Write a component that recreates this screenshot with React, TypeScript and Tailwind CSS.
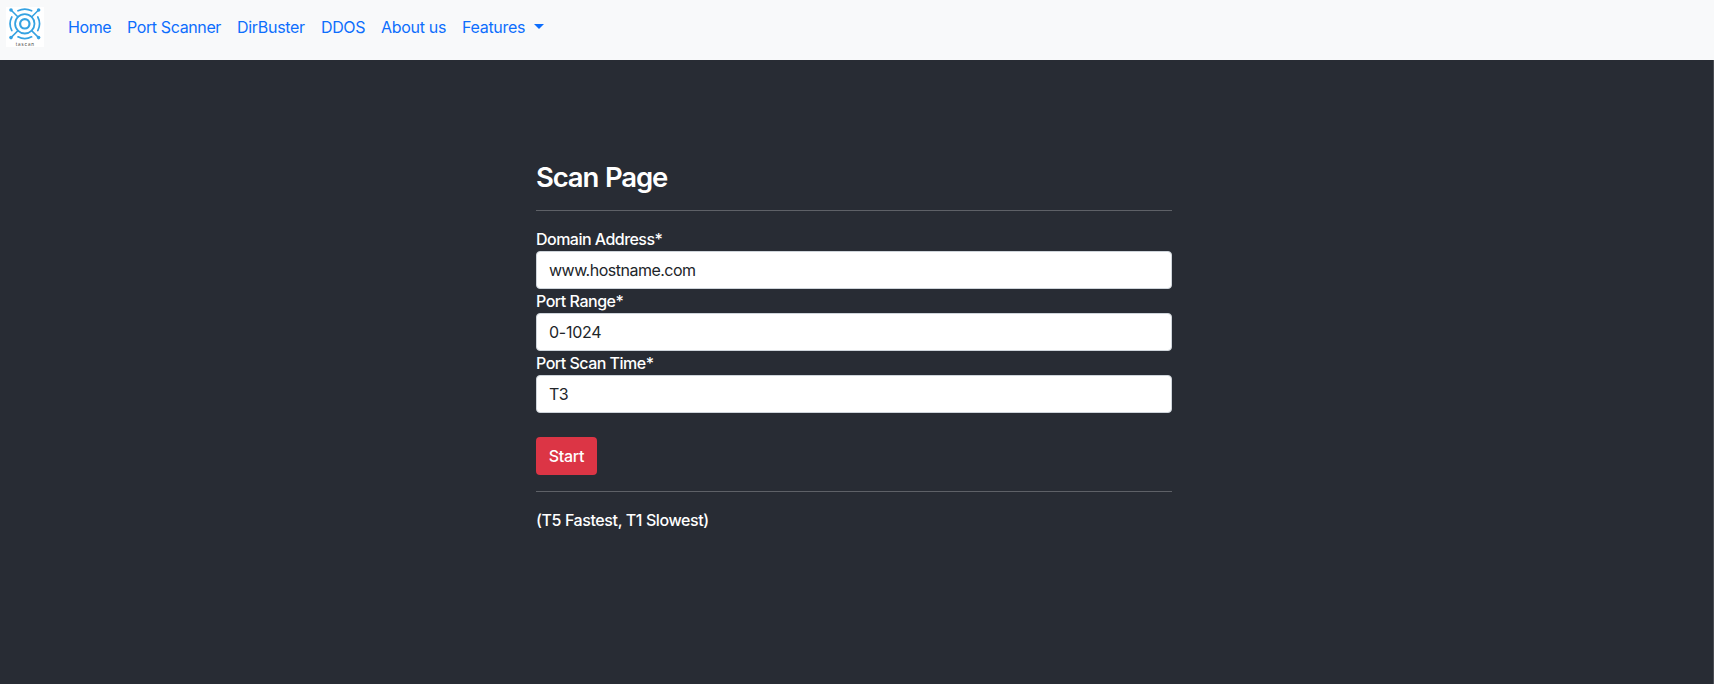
import React from 'react';

const links = [
  { label: 'Home', style: 'w-[59px] tracking-[-0.4px]' },
  { label: 'Port Scanner', style: 'w-[110px] tracking-[-0.38px]' },
  { label: 'DirBuster', style: 'w-[84px] tracking-[-0.3px]' },
  { label: 'DDOS', style: 'w-[60px] tracking-[-0.4px]' },
  { label: 'About us', style: 'w-[81px] tracking-[-0.3px]' },
];

const fields = [
  { label: 'Domain Address*', value: 'www.hostname.com', labelStyle: 'tracking-[-0.53px]', inputStyle: 'tracking-[-0.5px]' },
  { label: 'Port Range*', value: '0-1024', labelStyle: 'tracking-[-0.48px]', inputStyle: 'tracking-[-0.25px]' },
  { label: 'Port Scan Time*', value: 'T3', labelStyle: 'tracking-[-0.51px]', inputStyle: 'tracking-[-0.5px]' },
];

function Logo() {
  return (
    <svg viewBox="0 0 38 40" className="h-10 w-[38px] bg-white" fill="none" stroke="#35a2e2">
      <circle cx="18.8" cy="16.8" r="4.7" strokeWidth="2.2" />
      <circle cx="18.8" cy="16.8" r="9.7" strokeWidth="1.8" />
      <g strokeWidth="1.7" strokeLinecap="round">
        <path d="M12 3.8a14.7 14.7 0 0 1 13.6 0M12 29.8a14.7 14.7 0 0 0 13.6 0M5.8 10a14.7 14.7 0 0 0 0 13.6M31.8 10a14.7 14.7 0 0 1 0 13.6" />
        <path d="M5 3l7 7M32.6 3l-7 7M5 30.6l7-7M32.6 30.6l-7-7" strokeWidth="1.5" />
      </g>
      <g fill="#35a2e2" stroke="none">
        <circle cx="5" cy="3" r="1.8" />
        <circle cx="32.6" cy="3" r="1.8" />
        <circle cx="5" cy="30.6" r="1.8" />
        <circle cx="32.6" cy="30.6" r="1.8" />
      </g>
      <text x="9.7" y="39" fontSize="4.6" letterSpacing="0.75" fill="#444" stroke="none">
        tascan
      </text>
    </svg>
  );
}

export default function App() {
  return (
    <div className="flex h-[684px] flex-col border-r border-[#4a4d54] bg-[#282c34] font-['Inter',sans-serif] text-base text-white">
      <nav className="-mr-px flex h-[60px] shrink-0 items-start bg-[#f8f9fa] pl-1.5 text-[#0d6efd]">
        <div className="mr-6 pt-[7px]">
          <Logo />
        </div>
        <div className="flex pt-[15px]">
          {links.map((l) => (
            <a key={l.label} href="#" className={`whitespace-nowrap ${l.style}`}>
              {l.label}
            </a>
          ))}
          <a href="#" className="flex items-center tracking-[-0.3px]">
            <span className="w-[72px]">Features</span>
            <span className="mb-0.5 border-x-[5px] border-t-[5px] border-x-transparent border-t-[#0d6efd]" />
          </a>
        </div>
      </nav>
      <main className="ml-[536px] w-[636px] pt-[100px] font-[450]">
        <h3 className="h-[34px] text-[27.5px] leading-[34px] font-[560] tracking-[-1.15px] [word-spacing:1px]">Scan Page</h3>
        <hr className="mt-4 mb-4 border-t border-[#5e6167]" />
        <form onSubmit={(e) => e.preventDefault()}>
          {fields.map((f) => (
            <label key={f.label} className="block">
              <span className={`block h-6 ${f.labelStyle}`}>{f.label}</span>
              <input
                defaultValue={f.value}
                className={`block h-[38px] w-full rounded border border-[#ced4da] bg-white px-3 font-normal text-[#212529] outline-none ${f.inputStyle}`}
              />
            </label>
          ))}
          <button className="mt-6 block h-[38px] w-[61px] rounded bg-[#dc3545] tracking-[-0.3px]">Start</button>
        </form>
        <hr className="my-4 border-t border-[#5e6167]" />
        <p className="tracking-[-0.4px]">(T5 Fastest, T1 Slowest)</p>
      </main>
    </div>
  );
}
